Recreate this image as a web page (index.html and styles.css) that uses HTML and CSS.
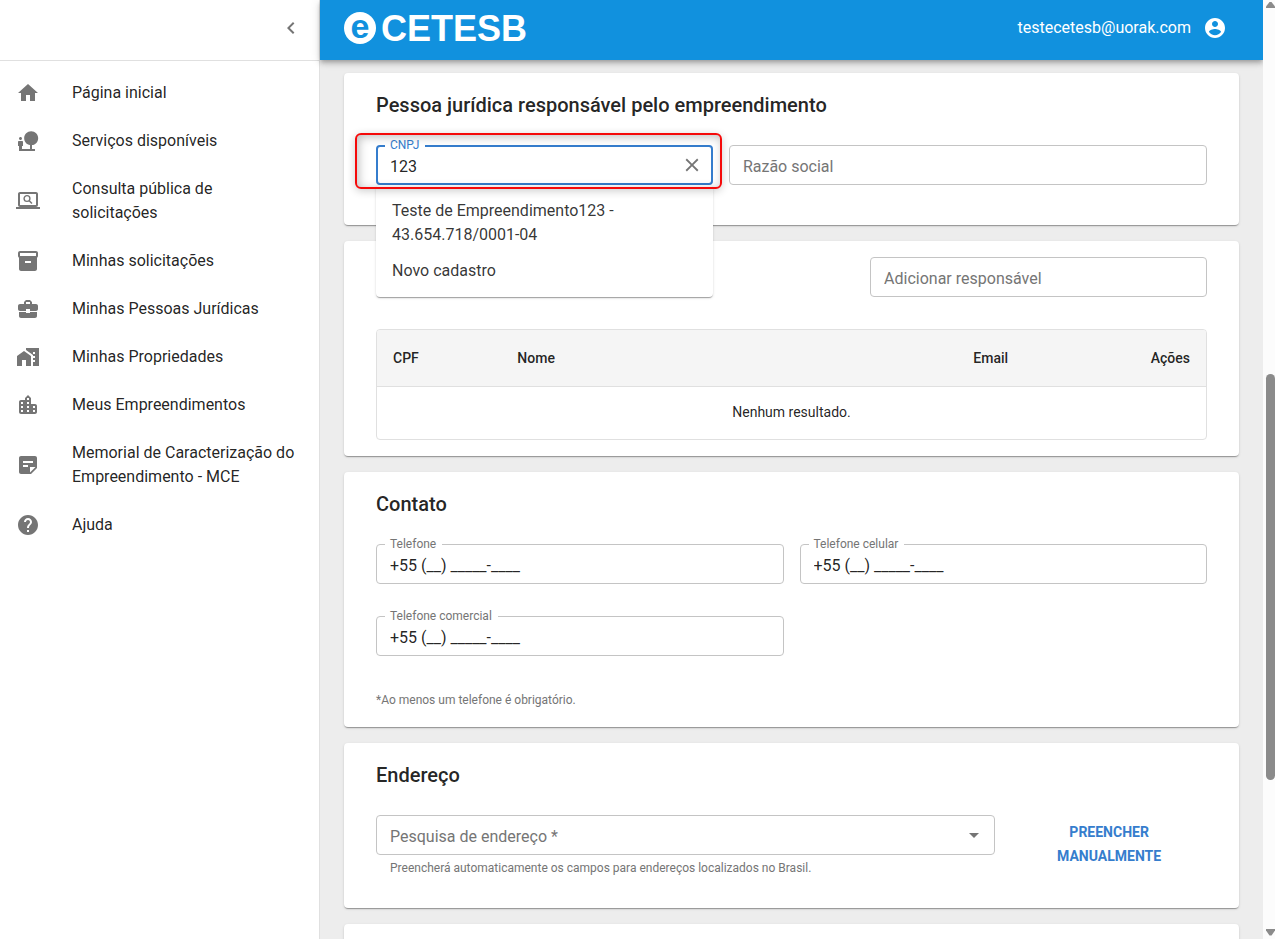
FILE: index.html
```html
<!DOCTYPE html>
<html lang="pt-BR">
<head>
    <meta charset="UTF-8">
    <meta name="viewport" content="width=device-width, initial-scale=1.0">
    <title>e-CETESB</title>
    <link rel="stylesheet" href="styles.css">
</head>
<body>
    <div class="app">
        <aside class="sidebar">
            <div class="sidebar-top">
                <button type="button" class="icon-button" aria-label="Recolher menu">
                    <svg class="icon" viewBox="0 0 24 24"><path d="M15.41 7.41 14 6l-6 6 6 6 1.41-1.41L10.83 12z"/></svg>
                </button>
            </div>
            <nav class="menu">
                <a class="menu-item" href="#">
                    <svg class="icon" viewBox="0 0 24 24"><path d="M10 20v-6h4v6h5v-8h3L12 3 2 12h3v8z"/></svg>
                    <span>Página inicial</span>
                </a>
                <a class="menu-item" href="#">
                    <svg class="icon" viewBox="0 0 24 24"><path d="M22.17 9.17c0-3.87-3.13-7-7-7s-7 3.13-7 7c0 3.47 2.52 6.34 5.83 6.89V20H6v-3h1v-4c0-.55-.45-1-1-1H3c-.55 0-1 .45-1 1v4h1v5h16v-2h-3v-3.88c3.47-.41 6.17-3.36 6.17-6.95zM4.5 11c.83 0 1.5-.67 1.5-1.5S5.33 8 4.5 8 3 8.67 3 9.5 3.67 11 4.5 11z"/></svg>
                    <span>Serviços disponíveis</span>
                </a>
                <a class="menu-item" href="#">
                    <svg class="icon" viewBox="0 0 24 24"><path d="M20 18c1.1 0 1.99-.9 1.99-2L22 5c0-1.1-.9-2-2-2H4c-1.1 0-2 .9-2 2v11c0 1.1.9 2 2 2H0v2h24v-2h-4zM4 5h16v11H4V5z"/><circle cx="11" cy="9.5" r="2.9" fill="none" stroke="currentColor" stroke-width="1.4"/><path d="m13 11.5 3 3" stroke="currentColor" stroke-width="1.5"/></svg>
                    <span>Consulta pública de solicitações</span>
                </a>
                <a class="menu-item" href="#">
                    <svg class="icon" viewBox="0 0 24 24"><path d="M20 2H4c-1 0-2 .9-2 2v3.01c0 .72.43 1.34 1 1.69V20c0 1.1 1.1 2 2 2h14c.9 0 2-.9 2-2V8.7c.57-.35 1-.97 1-1.69V4c0-1.1-1-2-2-2zm-5 12H9v-2h6v2zm5-7H4V4h16v3z"/></svg>
                    <span>Minhas solicitações</span>
                </a>
                <a class="menu-item" href="#">
                    <svg class="icon" viewBox="0 0 24 24"><path d="M10 16v-1H3.01L3 19c0 1.11.89 2 2 2h14c1.11 0 2-.89 2-2v-4h-7v1h-4zm10-9h-4.01V5l-2-2h-4l-2 2v2H4c-1.1 0-2 .9-2 2v3c0 1.11.89 2 2 2h6v-2h4v2h6c1.1 0 2-.9 2-2V9c0-1.1-.9-2-2-2zm-6 0h-4V5h4v2z"/></svg>
                    <span>Minhas Pessoas Jurídicas</span>
                </a>
                <a class="menu-item" href="#">
                    <svg class="icon" viewBox="0 0 24 24"><path d="M1 11v10h5v-6h4v6h5V11L8 6z"/><path d="M10 3v1.97l7 5V11h2v2h-2v2h2v2h-2v4h6V3H10zm9 6h-2V7h2v2z"/></svg>
                    <span>Minhas Propriedades</span>
                </a>
                <a class="menu-item" href="#">
                    <svg class="icon" viewBox="0 0 24 24"><path d="M15 11V5l-3-3-3 3v2H5c-1.100 0-2 .9-2 2v10c0 1.100.9 2 2 2h14c1.100 0 2-.9 2-2v-6c0-1.100-.9-2-2-2h-4zm-8 8H5v-2h2v2zm0-4H5v-2h2v2zm0-4H5V9h2v2zm6 8h-2v-2h2v2zm0-4h-2v-2h2v2zm0-4h-2V9h2v2zm0-4h-2V5h2v2zm6 12h-2v-2h2v2zm0-4h-2v-2h2v2z"/></svg>
                    <span>Meus Empreendimentos</span>
                </a>
                <a class="menu-item" href="#">
                    <svg class="icon" viewBox="0 0 24 24"><path d="M19 3H5c-1.1 0-2 .9-2 2v14c0 1.1.9 2 2 2h10l6-6V5c0-1.1-.9-2-2-2zm-7 11H7v-2h5v2zm5-4H7V8h10v2zm-3 9.5V14h5.5L14 19.5z"/></svg>
                    <span>Memorial de Caracterização do Empreendimento - MCE</span>
                </a>
                <a class="menu-item" href="#">
                    <svg class="icon" viewBox="0 0 24 24"><path d="M12 2C6.48 2 2 6.48 2 12s4.48 10 10 10 10-4.48 10-10S17.52 2 12 2zm1 17h-2v-2h2v2zm2.07-7.75-.9.92C13.45 12.9 13 13.5 13 15h-2v-.5c0-1.1.45-2.1 1.17-2.83l1.24-1.26c.37-.36.59-.86.59-1.41 0-1.1-.9-2-2-2s-2 .9-2 2H8c0-2.21 1.79-4 4-4s4 1.79 4 4c0 .88-.36 1.68-.93 2.25z"/></svg>
                    <span>Ajuda</span>
                </a>
            </nav>
        </aside>

        <div class="page">
            <header class="appbar">
                <a class="logo" href="#">
                    <span class="logo-mark">e</span>
                    <span class="logo-name">CETESB</span>
                </a>
                <button type="button" class="account">
                    testecetesb@uorak.com
                    <svg class="icon" viewBox="0 0 24 24"><path d="M12 2C6.48 2 2 6.48 2 12s4.48 10 10 10 10-4.48 10-10S17.52 2 12 2zm0 3c1.66 0 3 1.34 3 3s-1.34 3-3 3-3-1.34-3-3 1.34-3 3-3zm0 14.2c-2.5 0-4.71-1.28-6-3.22.03-1.99 4-3.08 6-3.08 1.99 0 5.97 1.09 6 3.08-1.29 1.94-3.5 3.22-6 3.22z"/></svg>
                </button>
            </header>

            <main class="content">
                <section class="card company">
                    <h2>Pessoa jurídica responsável pelo empreendimento</h2>
                    <div class="grid">
                        <div class="field focused span-5">
                            <label for="cnpj">CNPJ</label>
                            <input type="text" id="cnpj" value="123">
                            <button type="button" class="clear" aria-label="Limpar">
                                <svg class="icon" viewBox="0 0 24 24"><path d="M19 6.41 17.59 5 12 10.59 6.41 5 5 6.41 10.59 12 5 17.59 6.41 19 12 13.41 17.59 19 19 17.59 13.41 12z"/></svg>
                            </button>
                            <ul class="options">
                                <li>Teste de Empreendimento123 - 43.654.718/0001-04</li>
                                <li>Novo cadastro</li>
                            </ul>
                            <div class="highlight"></div>
                        </div>
                        <div class="field span-7">
                            <input type="text" aria-label="Razão social" placeholder="Razão social">
                        </div>
                    </div>
                </section>

                <section class="card">
                    <div class="grid">
                        <div class="field span-5 to-end">
                            <input type="text" aria-label="Adicionar responsável" placeholder="Adicionar responsável">
                        </div>
                    </div>
                    <div class="table-box">
                        <table>
                            <thead>
                                <tr>
                                    <th class="col-cpf">CPF</th>
                                    <th class="col-name">Nome</th>
                                    <th>Email</th>
                                    <th class="col-actions">Ações</th>
                                </tr>
                            </thead>
                            <tbody>
                                <tr>
                                    <td colspan="4">Nenhum resultado.</td>
                                </tr>
                            </tbody>
                        </table>
                    </div>
                </section>

                <section class="card">
                    <h2>Contato</h2>
                    <div class="grid">
                        <div class="field span-6">
                            <label for="telefone">Telefone</label>
                            <input type="tel" id="telefone" value="+55 (__) _____-____">
                        </div>
                        <div class="field span-6">
                            <label for="celular">Telefone celular</label>
                            <input type="tel" id="celular" value="+55 (__) _____-____">
                        </div>
                        <div class="field span-6">
                            <label for="comercial">Telefone comercial</label>
                            <input type="tel" id="comercial" value="+55 (__) _____-____">
                        </div>
                    </div>
                    <p class="note">*Ao menos um telefone é obrigatório.</p>
                </section>

                <section class="card address">
                    <h2>Endereço</h2>
                    <div class="grid">
                        <div class="span-9">
                            <div class="field with-arrow">
                                <input type="text" aria-label="Pesquisa de endereço" placeholder="Pesquisa de endereço *">
                                <svg class="icon arrow" viewBox="0 0 24 24"><path d="m7 10 5 5 5-5z"/></svg>
                            </div>
                            <p class="helper">Preencherá automaticamente os campos para endereços localizados no Brasil.</p>
                        </div>
                        <button type="button" class="text-button span-3">Preencher manualmente</button>
                    </div>
                </section>

                <section class="card last"></section>
            </main>
        </div>

        <div class="scrollbar">
            <svg class="scroll-arrow" viewBox="0 0 9 7"><path d="M0 7V5.5L3.5 1h2L9 5.5V7z"/></svg>
            <div class="track"><div class="thumb"></div></div>
            <svg class="scroll-arrow" viewBox="0 0 9 7"><path d="M0 0v1.5L3.5 6.5h2L9 1.5V0z"/></svg>
        </div>
    </div>
</body>
</html>
```

FILE: styles.css
```css
* {
    margin: 0;
    padding: 0;
    box-sizing: border-box;
}
body {
    font-family: Roboto, "Liberation Sans", sans-serif;
    font-size: 16px;
    line-height: 24px;
    color: rgba(0, 0, 0, 0.87);
    background-color: #ededed;
}
button,
input {
    font: inherit;
    color: inherit;
    background: none;
    border: none;
    outline: none;
}
button {
    cursor: pointer;
}
a {
    color: inherit;
    text-decoration: none;
}
.icon {
    width: 24px;
    height: 24px;
    flex-shrink: 0;
    fill: currentColor;
    display: block;
}
.app {
    display: flex;
    height: 100vh;
    overflow: hidden;
}

/* sidebar */
.sidebar {
    width: 320px;
    flex-shrink: 0;
    background-color: white;
    border-right: 1px solid #e0e0e0;
}
.sidebar-top {
    display: flex;
    align-items: center;
    justify-content: flex-end;
    height: 61px;
    padding: 0 16px 4px;
    border-bottom: 1px solid #e0e0e0;
}
.icon-button {
    color: #757575;
}
.menu {
    padding: 8px 0;
}
.menu-item {
    display: flex;
    align-items: center;
    gap: 32px;
    padding: 12px 20px 12px 16px;
}
.menu-item .icon {
    color: #757575;
}

/* top bar */
.page {
    flex: 1;
    min-width: 0;
}
.appbar {
    position: relative;
    display: flex;
    align-items: center;
    justify-content: space-between;
    height: 60px;
    padding: 0 36px 4px 24px;
    color: white;
    background-color: #1191de;
    box-shadow: 0 2px 4px -1px rgba(0, 0, 0, 0.2), 0 4px 5px rgba(0, 0, 0, 0.14), 0 1px 10px rgba(0, 0, 0, 0.12);
}
.logo {
    display: flex;
    align-items: center;
    gap: 5px;
    font-family: "Liberation Sans", Arial, sans-serif;
    font-weight: bold;
}
.logo-mark {
    width: 32px;
    height: 32px;
    border-radius: 50%;
    background-color: white;
    color: #1191de;
    font-size: 34px;
    line-height: 28px;
    text-align: center;
}
.logo-name {
    padding-top: 2px;
    font-size: 36px;
    line-height: 36px;
}
.account {
    display: flex;
    align-items: center;
    gap: 12px;
}

/* cards */
.content {
    display: flex;
    flex-direction: column;
    gap: 16px;
    padding: 13px 24px;
}
.card {
    padding: 16px 32px;
    border-radius: 4px;
    background-color: white;
    box-shadow: 0 2px 1px -1px rgba(0, 0, 0, 0.2), 0 1px 1px rgba(0, 0, 0, 0.14), 0 1px 3px rgba(0, 0, 0, 0.12);
}
.company {
    padding-bottom: 40px;
}
.address {
    padding-bottom: 30px;
}
.last {
    height: 160px;
}
h2 {
    margin-bottom: 24px;
    font-size: 20px;
    line-height: 32px;
    font-weight: 500;
}
.grid {
    display: grid;
    grid-template-columns: repeat(12, 1fr);
    gap: 32px 16px;
}
.span-3 { grid-column: span 3; }
.span-5 { grid-column: span 5; }
.span-6 { grid-column: span 6; }
.span-7 { grid-column: span 7; }
.span-9 { grid-column: span 9; }
.to-end {
    grid-column: 8 / span 5;
}

/* fields */
.field {
    position: relative;
    display: flex;
    align-items: center;
    height: 40px;
    padding: 0 13px;
    border: 1px solid #c4c4c4;
    border-radius: 4px;
}
.field input {
    flex: 1;
    min-width: 0;
    height: 26px;
    padding-top: 2px;
}
.field input::placeholder {
    color: #757575;
    opacity: 1;
}
.field label {
    position: absolute;
    top: -10px;
    left: 8px;
    padding: 0 6px 0 5px;
    font-size: 12px;
    line-height: 18px;
    color: #757575;
    background-color: white;
}
.focused {
    padding: 0 8px 0 12px;
    border: 2px solid #357dcd;
}
.focused label {
    top: -11px;
    left: 7px;
    color: #357dcd;
}
.with-arrow {
    padding-right: 8px;
}
.clear,
.arrow {
    color: #757575;
}
.clear .icon {
    width: 22px;
    height: 22px;
}
.options {
    position: absolute;
    top: 38px;
    left: -2px;
    right: -2px;
    z-index: 1;
    padding: 8px 0;
    list-style: none;
    color: rgba(0, 0, 0, 0.8);
    border-radius: 4px;
    background-color: white;
    box-shadow: 0 2px 1px -1px rgba(0, 0, 0, 0.2), 0 1px 1px rgba(0, 0, 0, 0.14), 0 1px 3px rgba(0, 0, 0, 0.12);
}
.options li {
    padding: 6px 16px;
}
.highlight {
    position: absolute;
    inset: -14px -11px -6px -23px;
    z-index: 2;
    border: 2px solid #f50a0a;
    border-radius: 6px;
    box-shadow: 0 2px 8px rgba(0, 0, 0, 0.2), inset 2px 2px 10px rgba(0, 0, 0, 0.25);
    pointer-events: none;
}

/* table */
.table-box {
    margin-top: 32px;
    border: 1px solid #e0e0e0;
    border-radius: 4px;
    overflow: hidden;
}
table {
    width: 100%;
    border-collapse: collapse;
    font-size: 14px;
}
th {
    height: 56px;
    padding: 0 16px;
    font-weight: 500;
    text-align: left;
    background-color: #f5f5f5;
    border-bottom: 1px solid #e0e0e0;
}
td {
    height: 53px;
    padding: 0 16px 2px;
    text-align: center;
}
.col-cpf {
    width: 15%;
}
.col-name {
    width: 55%;
}
.col-actions {
    text-align: right;
}

.note,
.helper {
    font-size: 12px;
    line-height: 20px;
    color: #757575;
}
.note {
    margin-top: 34px;
    margin-bottom: 1px;
}
.helper {
    margin: 3px 14px 0;
}
.text-button {
    align-self: start;
    padding: 5px 32px;
    font-size: 14px;
    font-weight: 700;
    text-transform: uppercase;
    color: #357dcd;
}

/* scrollbar */
.scrollbar {
    display: flex;
    flex-direction: column;
    align-items: center;
    width: 12px;
    padding: 1px 0 3px 3px;
    background-color: #fcfcfc;
    position: relative;
}
.scroll-arrow {
    width: 9px;
    height: 7px;
    fill: #8b8b8b;
}
.track {
    display: flex;
    flex: 1;
    flex-direction: column;
}
.track::before {
    content: "";
    flex: 366;
}
.track::after {
    content: "";
    flex: 149;
}
.thumb {
    flex: 407;
    width: 9px;
    border-radius: 5px;
    background-color: #8b8b8b;
}
```
